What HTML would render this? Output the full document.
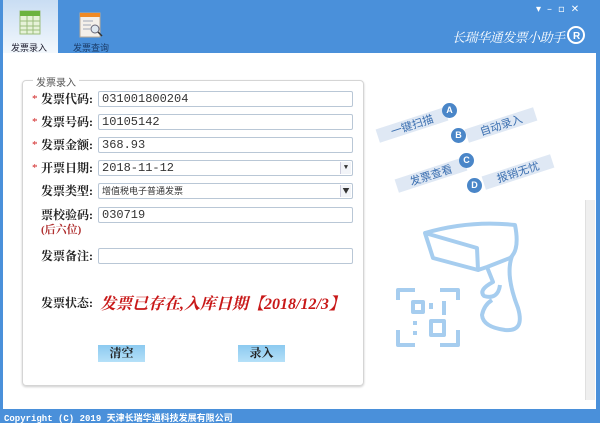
<!DOCTYPE html>
<html><head><meta charset="utf-8"><style>
*{margin:0;padding:0;box-sizing:border-box}
body{width:600px;height:423px;position:relative;overflow:hidden;background:#fff;font-family:"Liberation Serif","Noto Serif CJK SC",serif}
.a{position:absolute}
.hdr{left:0;top:0;width:600px;height:53px;background:#4a90da}
.bl{left:0;top:0;width:3px;height:423px;background:#4a90da}
.br{right:0;top:0;width:4px;height:423px;background:#4a90da}
.ft{left:0;top:409px;width:600px;height:14px;background:#4a90da;color:#fff;font:bold 9px "Liberation Mono","Noto Sans CJK SC",monospace;padding:2px 0 0 4px}
.tab1{left:3px;top:0;width:55px;height:53px;background:linear-gradient(#c9ddf3,#f3f8fd)}
.lab{font-weight:bold;font-size:12px;color:#222;left:41px;line-height:16px}
.star{color:#d02020;font-size:11px;left:32px;line-height:16px}
.in{left:98px;width:255px;height:16px;border:1px solid #b9c7d6;border-radius:2px;background:#fff;font:12px "Liberation Mono",monospace;color:#333;padding:0 0 0 3px;line-height:14px}
.dd{position:absolute;right:1px;top:1px;width:11px;height:12px;border-left:1px solid #ccd;background:#f2f4f8;font-size:7px;text-align:center;line-height:12px;color:#333}
.btn{top:345px;width:47px;height:17px;background:linear-gradient(#8ccaf0,#b5e0f8);color:#222;font-size:12px;font-weight:bold;text-align:center;line-height:17px}
.tag{background:#dfe8f4;color:#3b6fb0;font:11px "Noto Sans CJK SC",sans-serif;height:14px;line-height:14px;padding:0 14px;transform:rotate(-18deg)}
.c{width:15px;height:15px;border-radius:50%;background:#4a86c8;color:#fff;font:bold 9px "Liberation Sans",sans-serif;text-align:center;line-height:15px}
</style></head><body>
<div class="a hdr"></div>
<div class="a tab1"></div>
<svg class="a" style="left:18px;top:8px" width="26" height="28"><rect x="2" y="3" width="20" height="23" fill="#e6f2d8" stroke="#9bbd7c"/><rect x="2" y="3" width="20" height="5" fill="#6cb33f"/><g stroke="#9bbd7c"><line x1="2" y1="13" x2="22" y2="13"/><line x1="2" y1="18" x2="22" y2="18"/><line x1="2" y1="22" x2="22" y2="22"/><line x1="9" y1="8" x2="9" y2="26"/><line x1="15" y1="8" x2="15" y2="26"/></g></svg>
<div class="a" style="left:11px;top:41px;font:9px 'Noto Sans CJK SC',sans-serif;color:#223">发票录入</div>
<svg class="a" style="left:78px;top:11px" width="28" height="28"><rect x="2" y="2" width="20" height="24" fill="#f4f0ea" stroke="#b8aa98"/><rect x="2" y="2" width="20" height="4" fill="#f08a24"/><g stroke="#a0a8b8"><line x1="5" y1="10" x2="15" y2="10"/><line x1="5" y1="14" x2="13" y2="14"/><line x1="5" y1="18" x2="12" y2="18"/></g><circle cx="17" cy="18" r="4" fill="#dfe8f0" stroke="#667"/><line x1="20" y1="21" x2="24" y2="25" stroke="#333" stroke-width="1.5"/></svg>
<div class="a" style="left:73px;top:41px;font:9px 'Noto Sans CJK SC',sans-serif;color:#1b3d6a">发票查询</div>
<div class="a" style="left:536px;top:4px;color:#fff;font:10px 'DejaVu Sans',sans-serif;letter-spacing:6px">▾–▫✕</div>
<div class="a" style="left:452px;top:27px;color:#fff;font:italic 13px 'Noto Serif CJK SC',serif;letter-spacing:-0.5px">长瑞华通发票小助手</div>
<svg class="a" style="left:566px;top:24px" width="20" height="22"><circle cx="10" cy="11" r="8" fill="none" stroke="#fff" stroke-width="2"/><text x="7" y="15" fill="#fff" font-size="10" font-weight="bold" font-family="Liberation Sans">R</text></svg>
<div class="a bl"></div><div class="a br"></div>
<div class="a" style="left:22px;top:80px;width:342px;height:306px;border:1px solid #d5d5d5;border-radius:4px;box-shadow:0 1px 2px #ccc"></div>
<div class="a" style="left:33px;top:74px;background:#fff;padding:0 3px;font:10px 'Noto Sans CJK SC',sans-serif;color:#555">发票录入</div>

<div class="a star" style="top:91px">*</div><div class="a lab" style="top:91px">发票代码:</div><div class="a in" style="top:91px">031001800204</div>
<div class="a star" style="top:114px">*</div><div class="a lab" style="top:114px">发票号码:</div><div class="a in" style="top:114px">10105142</div>
<div class="a star" style="top:137px">*</div><div class="a lab" style="top:137px">发票金额:</div><div class="a in" style="top:137px">368.93</div>
<div class="a star" style="top:160px">*</div><div class="a lab" style="top:160px">开票日期:</div><div class="a in" style="top:160px">2018-11-12<span class="dd">▼</span></div>
<div class="a lab" style="top:183px">发票类型:</div><div class="a in" style="top:183px;font:9px 'Noto Sans CJK SC',sans-serif;line-height:14px">增值税电子普通发票<span class="dd">▼</span></div>
<div class="a lab" style="top:207px">票校验码:</div><div class="a in" style="top:207px">030719</div>
<div class="a" style="left:41px;top:221px;color:#b03030;font-weight:bold;font-size:11px">(后六位)</div>
<div class="a lab" style="top:248px">发票备注:</div><div class="a in" style="top:248px"></div>
<div class="a lab" style="top:295px">发票状态:</div>
<div class="a" style="left:100px;top:291px;color:#c81818;font:italic bold 16px 'Liberation Serif','Noto Serif CJK SC',serif">发票已存在,入库日期【2018/12/3】</div>
<div class="a btn" style="left:98px">清空</div>
<div class="a btn" style="left:238px">录入</div>

<div class="a tag" style="left:376px;top:118px">一键扫描</div><div class="a c" style="left:442px;top:103px">A</div>
<div class="a c" style="left:451px;top:128px">B</div><div class="a tag" style="left:465px;top:118px">自动录入</div>
<div class="a tag" style="left:395px;top:168px">发票查看</div><div class="a c" style="left:459px;top:153px">C</div>
<div class="a c" style="left:467px;top:178px">D</div><div class="a tag" style="left:482px;top:165px">报销无忧</div>

<svg class="a" style="left:380px;top:190px" width="210" height="180" fill="none" stroke="#a6cdef" stroke-width="4" stroke-linejoin="round">
<path d="M45 43 L53 68 L98 80 L97 58 Z"/><path d="M45 43 Q90 30 135 35 Q140 60 130 68 L107 77 L98 80"/>
<path d="M107 77 L113 92 Q98 100 104 106 Q118 110 120 95"/>
<path d="M132 66 Q125 85 138 118 Q145 142 125 140 Q103 137 102 125 Q104 115 112 110"/>
<path d="M18 110 V100 H35 M60 100 H78 V110 M18 140 V155 H35 M60 155 H78 V140"/>
<rect x="33" y="112" width="10" height="10"/><rect x="51" y="131" width="13" height="14"/><path d="M51 113 v6 M64 111 v14 M35 131 v4 M35 141 v4"/>
</svg>
<div class="a" style="left:585px;top:200px;width:10px;height:200px;background:#efefef;border-left:1px solid #e0e0e0"></div>
<div class="a ft">Copyright (C) 2019 天津长瑞华通科技发展有限公司</div>
</body></html>
